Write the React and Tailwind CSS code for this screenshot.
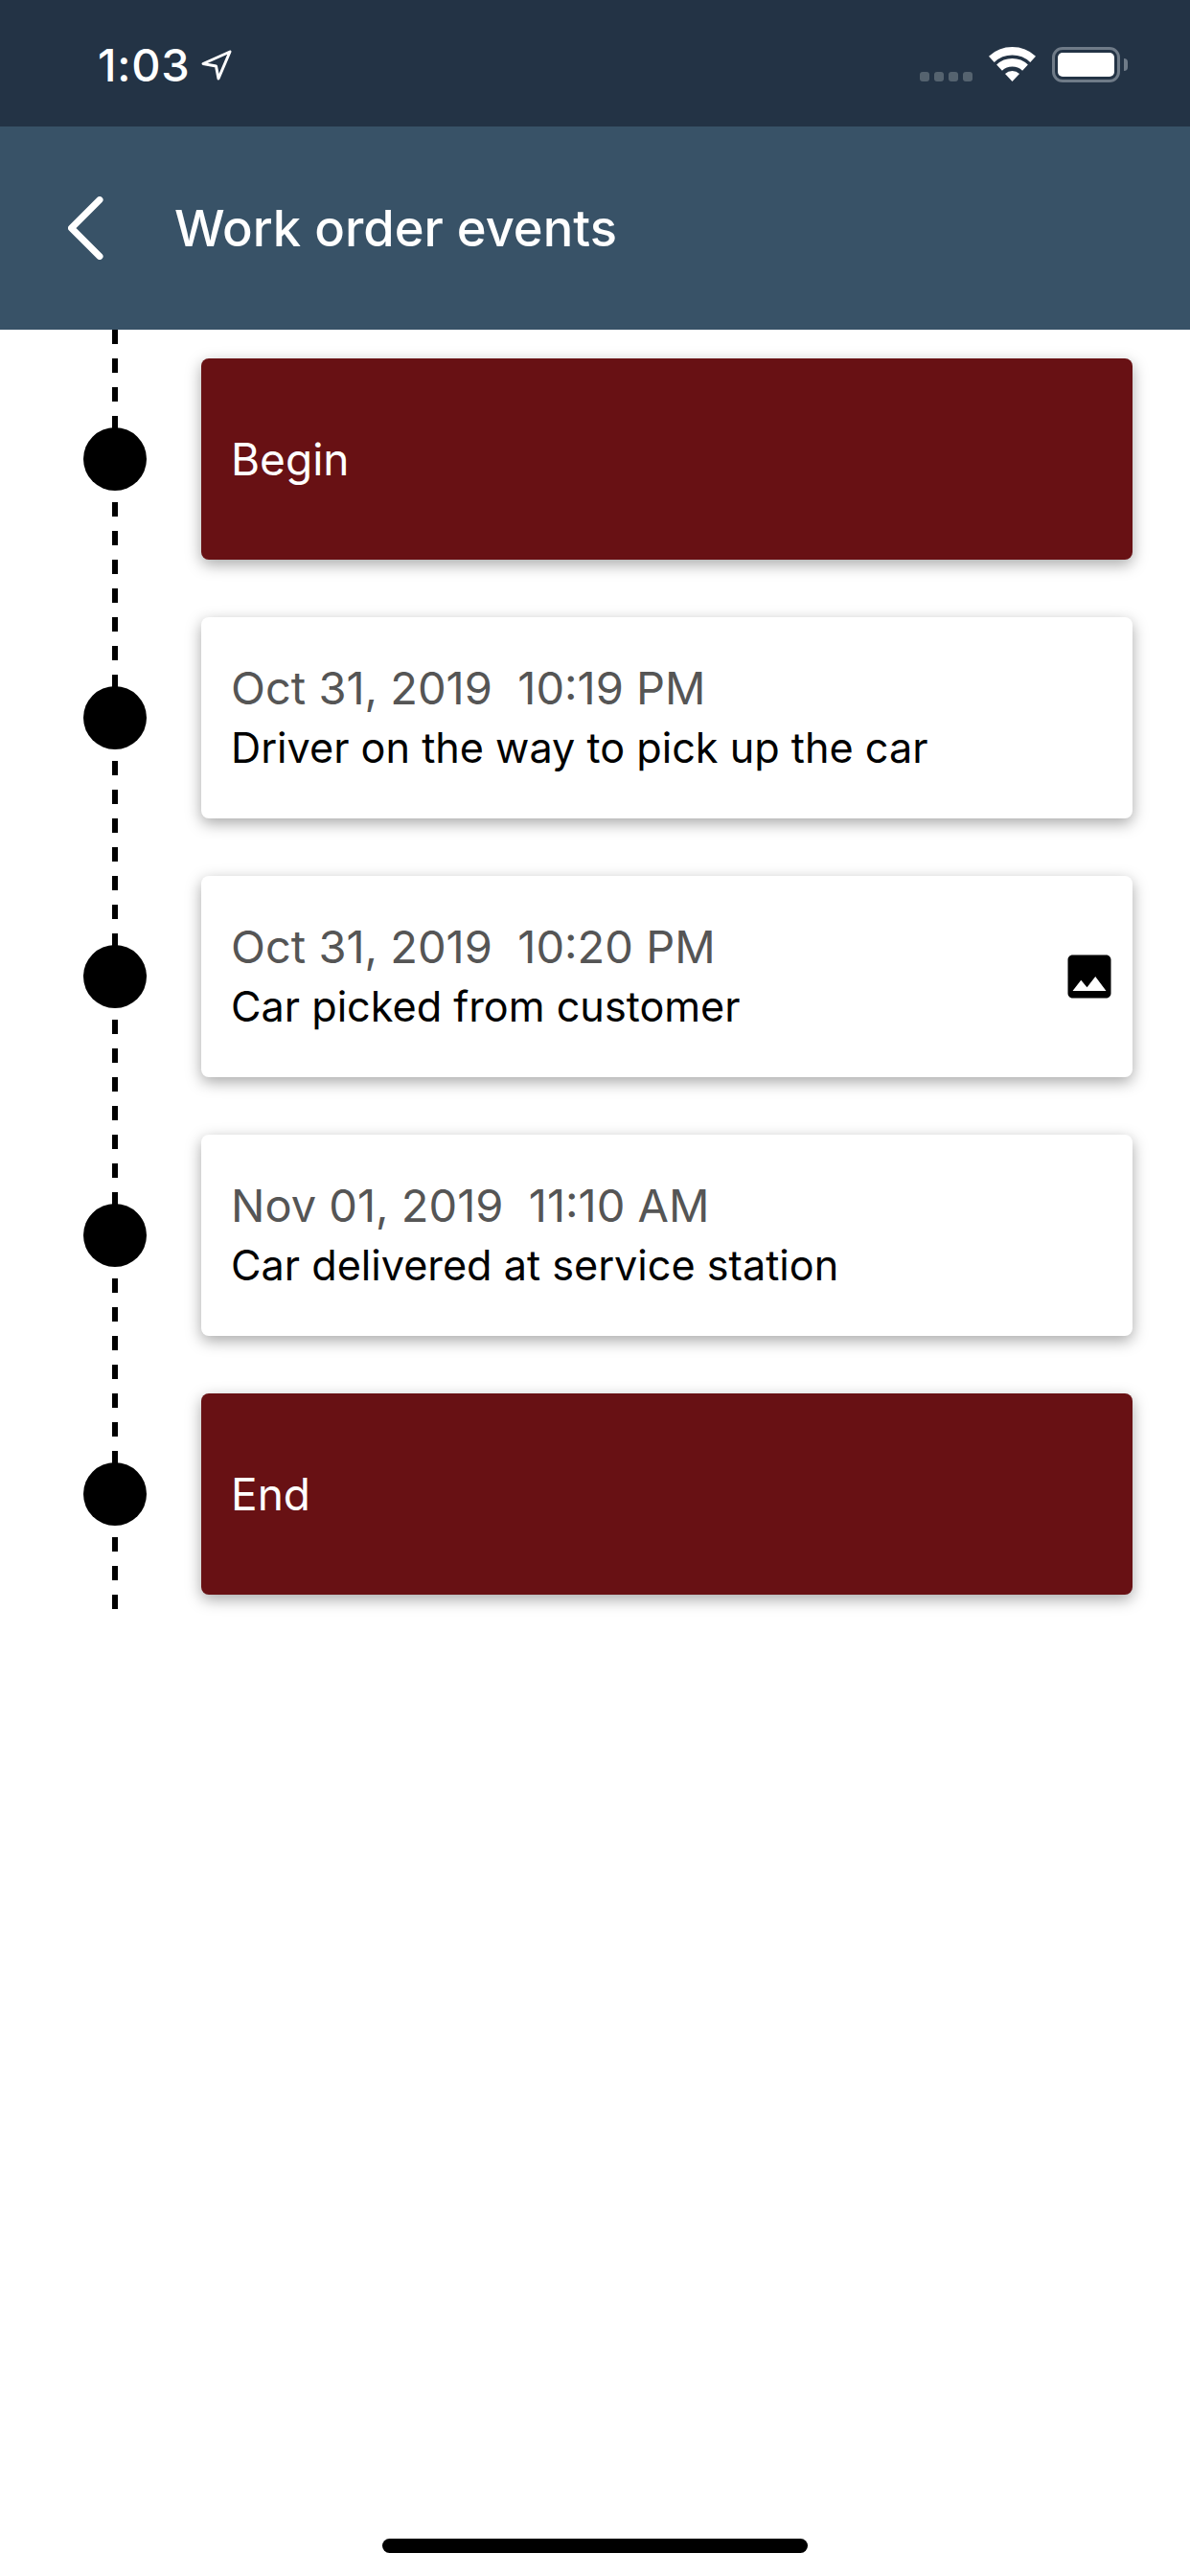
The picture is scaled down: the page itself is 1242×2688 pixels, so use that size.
import React from "react";

const FONT = "font-['Inter','Liberation_Sans',sans-serif]";

const EVENTS = [
  { id: 1, title: "Begin", marker: true },
  { id: 2, date: "Oct 31, 2019  10:19 PM", title: "Driver on the way to pick up the car" },
  { id: 3, date: "Oct 31, 2019  10:20 PM", title: "Car picked from customer", hasImage: true },
  { id: 4, date: "Nov 01, 2019  11:10 AM", title: "Car delivered at service station" },
  { id: 5, title: "End", marker: true },
];

const LocationArrow = () => (
  <svg width="32" height="32" viewBox="0 0 32 32" fill="none" stroke="#fff" strokeWidth="3" strokeLinejoin="round">
    <path d="M30 2 L2 14.5 L15.5 17 L18 30 Z" />
  </svg>
);

const Wifi = () => (
  <svg width="49" height="36" viewBox="0 0 49 36" fill="none">
    <path d="M2.85 12.8 A31.75 31.75 0 0 1 46.15 12.8" stroke="#fff" strokeWidth="8.5" />
    <path d="M11.03 21.56 A19.75 19.75 0 0 1 37.97 21.56" stroke="#fff" strokeWidth="8.5" />
    <path d="M24.5 36 L17 27.96 A11 11 0 0 1 32 27.96 Z" fill="#fff" />
  </svg>
);

const Battery = () => (
  <div className="flex items-center gap-[4px]">
    <div className="w-[71px] h-[37px] rounded-[11px] border-[3px] border-[#6f7b88] p-[3px]">
      <div className="w-full h-full rounded-[5px] bg-white" />
    </div>
    <div className="w-[4px] h-[13px] rounded-r-[4px] bg-[#6f7b88]" />
  </div>
);

const StatusBar = () => (
  <div className="h-[132px] bg-[#233345] flex items-start justify-between pl-[102px] pr-[65px] pt-[49px] shrink-0">
    <div className="flex items-center gap-[12px] h-[37px]">
      <span className="text-[47px] leading-[37px] font-medium text-white tracking-[0.7px]">1:03</span>
      <LocationArrow />
    </div>
    <div className="flex items-start">
      <div className="flex gap-[5px] mt-[26px] mr-[17px]">
        {[0, 1, 2, 3].map((i) => (
          <div key={i} className="w-[10px] h-[10px] rounded-[3px] bg-[#55636f]" />
        ))}
      </div>
      <div className="mr-[17px]">
        <Wifi />
      </div>
      <Battery />
    </div>
  </div>
);

const Header = () => (
  <div className="h-[212px] bg-[#385267] flex items-center pl-[71px] shrink-0">
    <svg width="37" height="66" viewBox="0 0 37 66" fill="none" stroke="#fff" strokeWidth="7" strokeLinecap="round" strokeLinejoin="round">
      <path d="M33 3.5 L3.5 33 L33 62.5" />
    </svg>
    <h1 className="ml-[74px] text-[52.5px] font-medium text-white leading-none">Work order events</h1>
  </div>
);

const ImageIcon = () => (
  <svg width="60" height="60" viewBox="0 0 24 24" fill="#000" className="absolute right-[15px] top-1/2 -translate-y-1/2">
    <path d="M21 19V5c0-1.1-.9-2-2-2H5c-1.1 0-2 .9-2 2v14c0 1.1.9 2 2 2h14c1.1 0 2-.9 2-2zM8.5 13.5l2.5 3.01L14.5 12l4.5 6H5l3.5-4.5z" />
  </svg>
);

const EventRow = ({ event }) => (
  <div className="flex h-[270px]">
    {/* dashed rail, the gradient repeats every 30px */}
    <div className="w-[240px] flex items-center justify-center shrink-0 bg-[linear-gradient(to_bottom,#000_15px,transparent_15px)] bg-[length:6px_30px] bg-repeat-y bg-[position:center_top]">
      <div className="w-[66px] h-[66px] rounded-full bg-black" />
    </div>
    <div className="flex-1 py-[30px] pr-[60px] ml-[-30px]">
      <div
        className={`relative h-full rounded-[8px] pl-[31px] flex flex-col justify-center shadow-[0_5px_16px_rgba(0,0,0,0.35)] ${
          event.marker ? "bg-[#681114] text-white" : "bg-white text-black"
        }`}
      >
        {event.date && (
          <p className="text-[47px] leading-[62px] text-[#555555] whitespace-pre">{event.date}</p>
        )}
        {event.marker ? (
          <p className="text-[46px] leading-[62px]">{event.title}</p>
        ) : (
          <p className="text-[43.2px] leading-[62px]">{event.title}</p>
        )}
        {event.hasImage && <ImageIcon />}
      </div>
    </div>
  </div>
);

export default function App() {
  return (
    <div className={`w-[1242px] h-[2688px] bg-white flex flex-col ${FONT}`}>
      <StatusBar />
      <Header />
      <div className="flex flex-col">
        {EVENTS.map((event) => (
          <EventRow key={event.id} event={event} />
        ))}
      </div>
      <div className="mt-auto mb-[24px] self-center w-[444px] h-[15px] rounded-full bg-black" />
    </div>
  );
}
